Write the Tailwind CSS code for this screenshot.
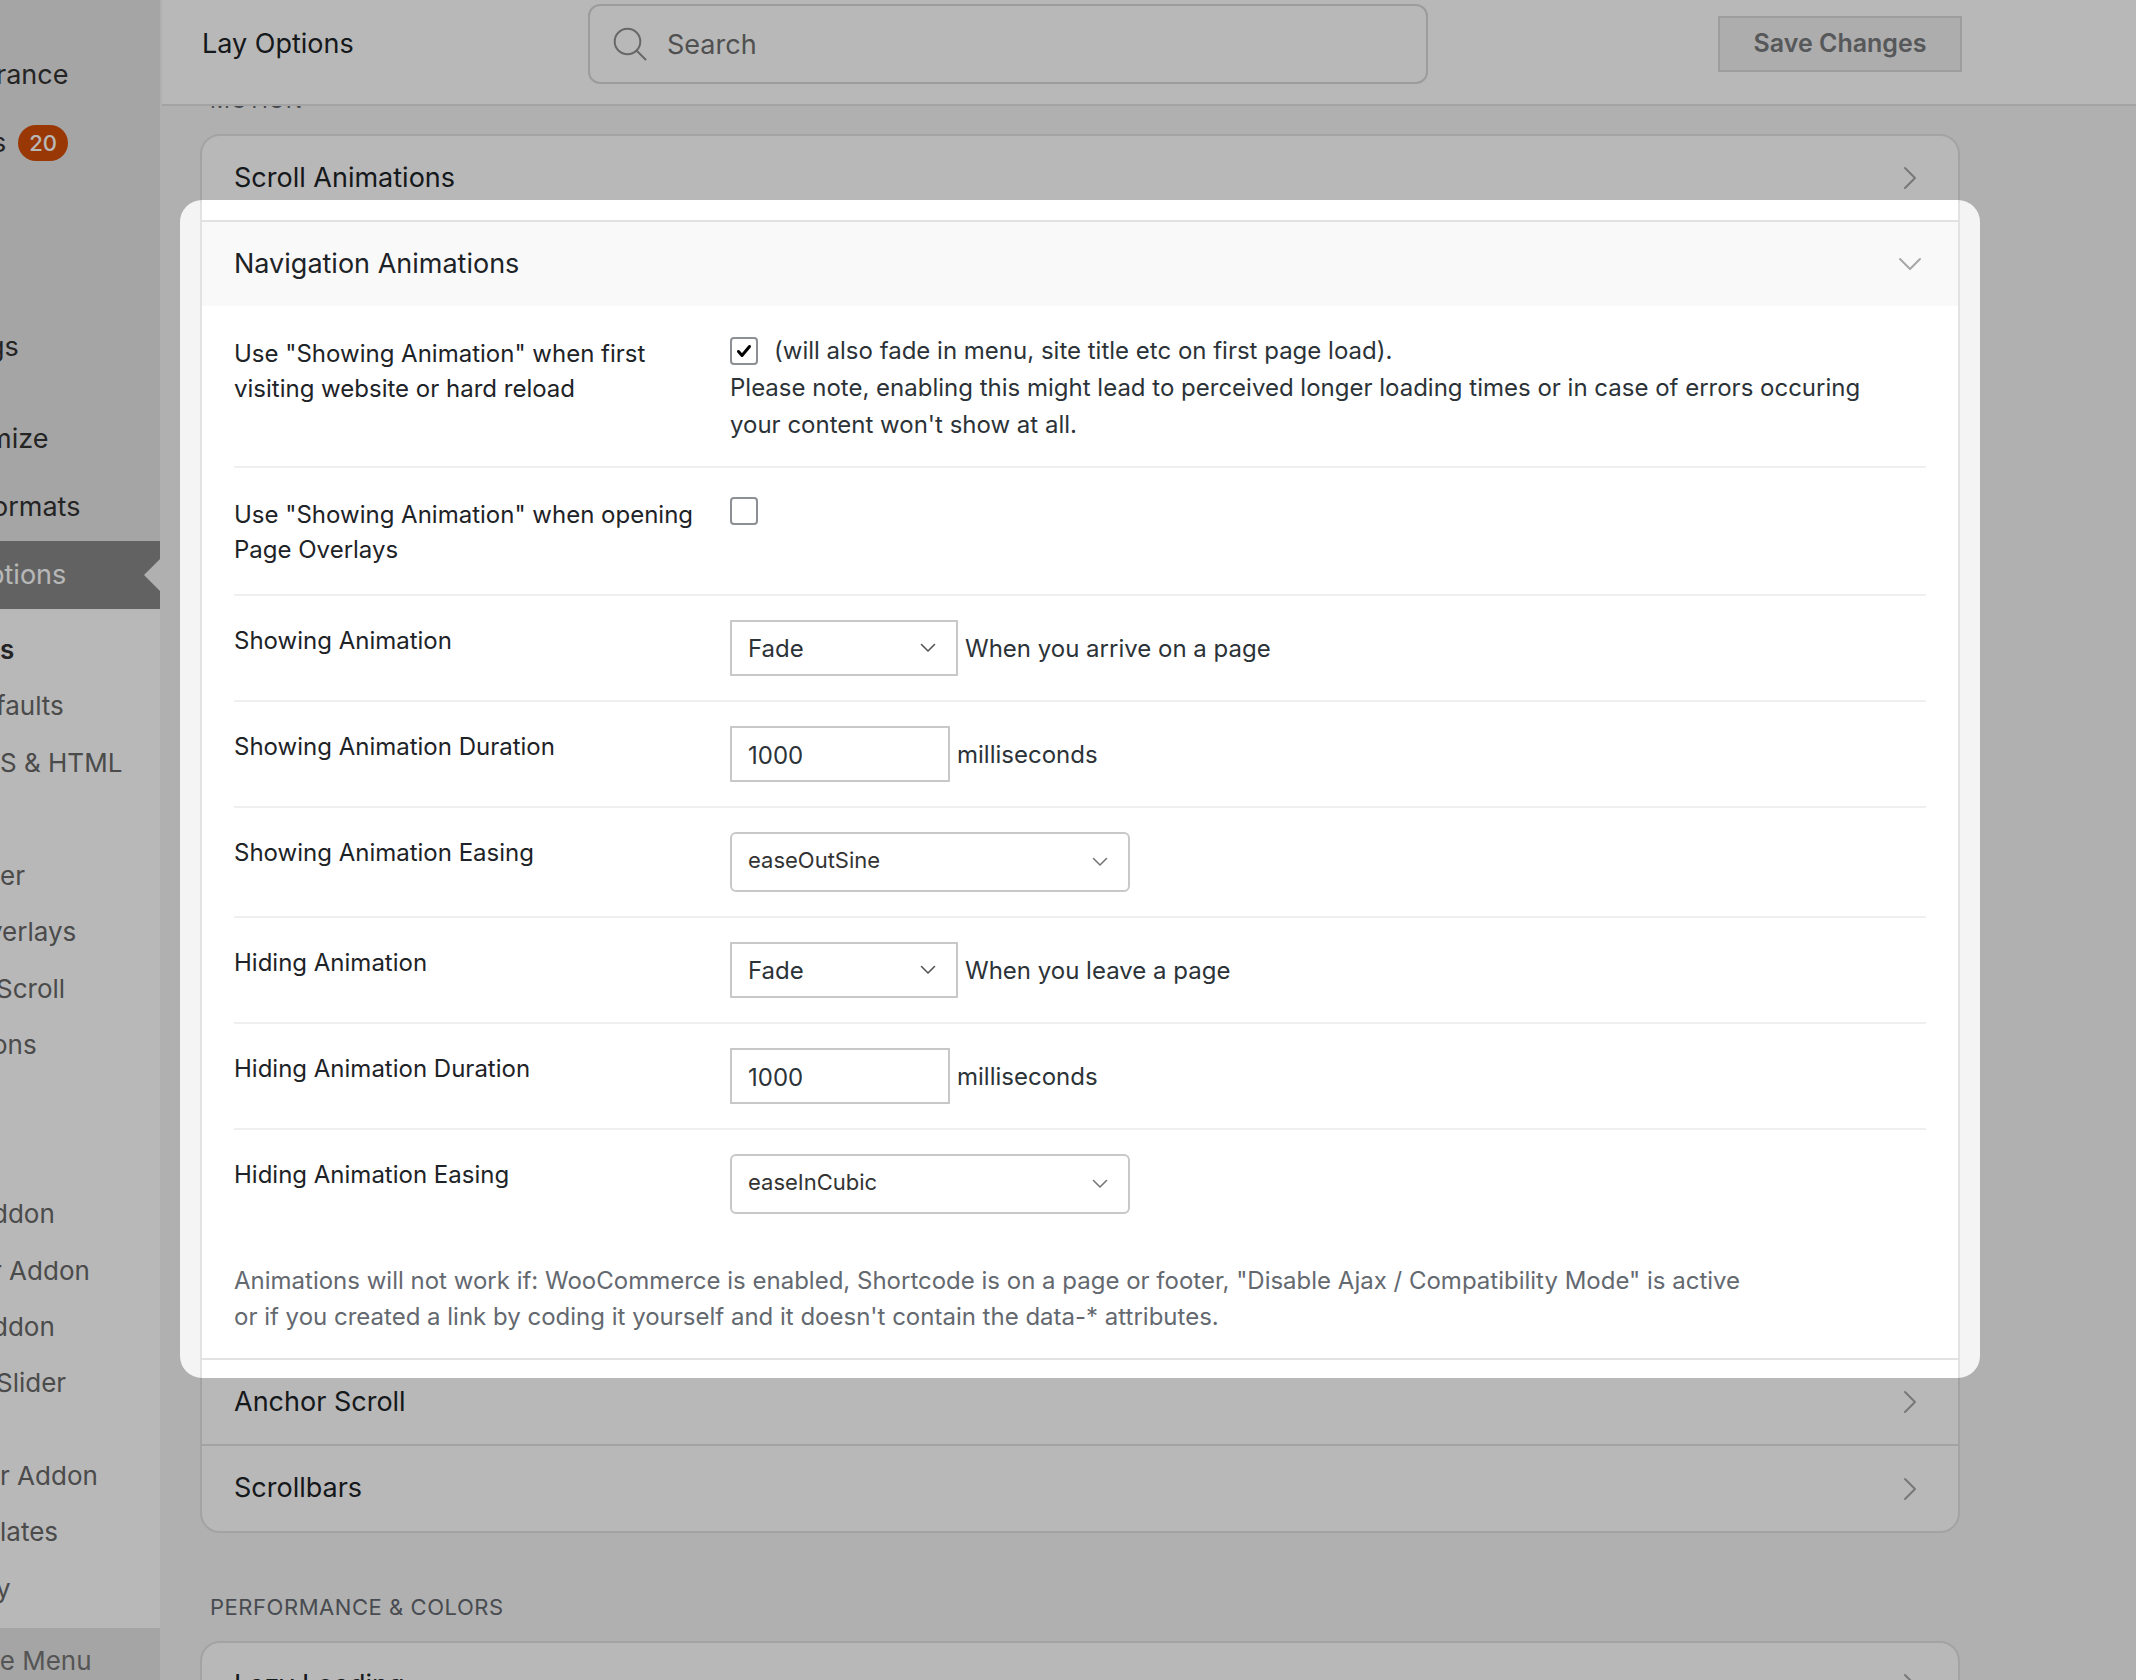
<!DOCTYPE html>
<html lang="en">
<head>
<meta charset="utf-8">
<meta name="viewport" content="width=device-width, initial-scale=1">
<title>Lay Options</title>
<script src="https://cdn.jsdelivr.net/npm/@tailwindcss/browser@4"></script>
</head>
<body class="font-[Inter,sans-serif] bg-[#f4f4f4] text-[#1d2327]">
<div class="relative flex h-screen overflow-hidden">

  <!-- Admin menu, scrolled partly off the left edge -->
  <nav aria-label="Admin menu" class="flex w-40 shrink-0 flex-col overflow-hidden bg-[#e5e5e5] text-[27px] leading-9 text-[#333] whitespace-nowrap">
    <ul class="-ml-1 pt-[41px]">
      <li><a href="#" class="flex h-17 items-center">rance</a></li>
      <li><a href="#" class="-ml-1 flex h-17 items-center gap-3">s <span class="flex h-9 items-center rounded-full bg-[#d64e07] px-[11px] text-[22px] font-medium text-white">20</span></a></li>
      <li class="h-34"></li>
      <li><a href="#" class="-ml-2 flex h-17 items-center">gs</a></li>
      <li class="h-6"></li>
      <li><a href="#" class="-ml-2 flex h-17 items-center">mize</a></li>
      <li><a href="#" class="-ml-1 flex h-17 items-center">ormats</a></li>
    </ul>
    <a href="#" aria-current="page" class="flex h-17 items-center justify-between bg-[#888] text-white">
      <span class="-ml-3">ptions</span>
      <svg class="h-8 w-4" viewBox="0 0 16 32" aria-hidden="true"><path d="M16 0L0 16L16 32Z" fill="#f4f4f4"/></svg>
    </a>
    <ul class="flex flex-1 flex-col justify-between bg-white pt-[13px] pb-[11px] text-[26px] text-[#686868]">
      <li><a href="#" class="flex h-14 items-center font-semibold text-[#333]">s</a></li>
      <li><a href="#" class="-ml-1 flex h-14 items-center">faults</a></li>
      <li><a href="#" class="flex h-14 items-center">S &amp; HTML</a></li>
      <li class="h-14"></li>
      <li><a href="#" class="flex h-14 items-center">er</a></li>
      <li><a href="#" class="-ml-3 flex h-14 items-center">verlays</a></li>
      <li><a href="#" class="-ml-1 flex h-14 items-center">Scroll</a></li>
      <li><a href="#" class="-ml-2 flex h-14 items-center">ons</a></li>
      <li class="h-28"></li>
      <li><a href="#" class="-ml-2 flex h-14 items-center">ddon</a></li>
      <li><a href="#" class="-ml-2 flex h-14 items-center">r Addon</a></li>
      <li><a href="#" class="-ml-2 flex h-14 items-center">ddon</a></li>
      <li><a href="#" class="-ml-1 flex h-23 items-start pt-2.5">Slider</a></li>
      <li><a href="#" class="flex h-14 items-center">r Addon</a></li>
      <li><a href="#" class="flex h-14 items-center">lates</a></li>
      <li><a href="#" class="-ml-1 flex h-14 items-center">y</a></li>
    </ul>
    <button type="button" class="-ml-3.5 h-13 pt-3.5 text-left text-[26px] text-[#777]">se Menu</button>
  </nav>

  <main class="min-w-0 flex-1">
    <header class="relative z-10 ml-0.5 h-[106px] border-b-2 border-[#e2e2e2] bg-white pl-10">
      <div class="flex h-[88px] max-w-[1760px] items-center">
        <h1 class="w-[386px] shrink-0 text-[27px] leading-9">Lay Options</h1>
        <label class="flex h-20 w-full max-w-[840px] items-center gap-5 rounded-xl border-2 border-[#d8d8d8] pl-[23px]">
          <svg class="size-[34px] shrink-0" viewBox="0 0 34 34" fill="none" stroke="#8f8f8f" stroke-width="2" stroke-linecap="round" aria-hidden="true"><circle cx="14.500" cy="14.500" r="12.800"/><path d="M23.500 23.500L32.500 32.500"/></svg>
          <input type="search" placeholder="Search" aria-label="Search" class="min-w-0 flex-1 bg-transparent pt-0.5 text-[27px] leading-9 outline-none placeholder:text-[#707070]">
        </label>
        <button type="button" class="ml-auto h-14 w-61 shrink-0 border-2 border-[#dcdcdc] bg-[#f0f0f0] text-[25px] font-semibold text-[#787a7d]">Save Changes</button>
      </div>
    </header>

    <div class="-mt-6 max-w-[1840px] px-10 text-[24px]">
      <h2 class="mb-4 px-2.5 text-[22px] leading-9 tracking-wide text-[#646970]">MOTION</h2>
      <div class="rounded-[20px] border-2 border-[#e2e2e2] bg-white">
        <button type="button" class="flex h-21 w-full items-center justify-between pr-9 pl-8 text-[27px]">Scroll Animations
          <svg class="size-6" viewBox="0 0 24 24" fill="none" stroke="#a7a7a7" stroke-width="2" stroke-linecap="round" stroke-linejoin="round" aria-hidden="true"><path d="M7 2L17 12L7 22"/></svg>
        </button>

        <section class="relative border-y-2 border-[#e2e2e2]">
          <button type="button" aria-expanded="true" class="flex h-21 w-full items-center justify-between bg-[#f9f9f9] pr-9 pl-8 text-[27px]">Navigation Animations
            <svg class="size-6" viewBox="0 0 24 24" fill="none" stroke="#a7a7a7" stroke-width="2" stroke-linecap="round" stroke-linejoin="round" aria-hidden="true"><path d="M2 7L12 17L22 7"/></svg>
          </button>

          <div class="px-8 pt-px">
            <div class="flex border-b-2 border-[#efefef]">
              <label for="first" class="w-124 shrink-0 pt-[29px] pb-[27px] pr-10 leading-[35px]">Use "Showing Animation" when first visiting website or hard reload</label>
              <div class="pt-[25px] pb-[23px] leading-[37px] text-[#2c3338]">
                <div class="flex items-center gap-4">
                  <span class="relative flex size-7 shrink-0">
                    <input id="first" type="checkbox" checked class="peer size-7 appearance-none rounded-[4px] border-2 border-[#8c8f94] bg-white">
                    <svg class="pointer-events-none absolute inset-0 hidden peer-checked:block" viewBox="0 0 28 28" fill="none" stroke="#000" stroke-width="3" stroke-linecap="round" stroke-linejoin="round" aria-hidden="true"><path d="M8.500 14.500L12 18.500L19.500 9.500"/></svg>
                  </span>
                  <span>(will also fade in menu, site title etc on first page load).</span>
                </div>
                <p>Please note, enabling this might lead to perceived longer loading times or in case of errors occuring<br>your content won't show at all.</p>
              </div>
            </div>

            <div class="flex border-b-2 border-[#efefef]">
              <label for="overlays" class="w-124 shrink-0 pt-[29px] pb-[27px] pr-6 leading-[35px]">Use "Showing Animation" when opening Page Overlays</label>
              <div class="pt-[29px]">
                <input id="overlays" type="checkbox" class="block size-7 appearance-none rounded-[4px] border-2 border-[#8c8f94] bg-white">
              </div>
            </div>

            <div class="flex border-b-2 border-[#efefef]">
              <label for="show" class="w-124 shrink-0 pt-[27px] leading-[35px]">Showing Animation</label>
              <div class="flex items-center gap-[7px] py-6 text-[#2c3338]">
                <span class="relative">
                  <select id="show" class="block h-14 w-57 appearance-none border-2 border-[#c8c8c8] bg-white px-4 pt-0.5"><option>Fade</option></select>
                  <svg class="pointer-events-none absolute top-5 right-5.5 size-4" viewBox="0 0 16 16" fill="none" stroke="#555" stroke-width="1.600" stroke-linecap="round" stroke-linejoin="round" aria-hidden="true"><path d="M1.500 4.500L8 11L14.500 4.500"/></svg>
                </span>
                <span class="pt-0.5">When you arrive on a page</span>
              </div>
            </div>

            <div class="flex border-b-2 border-[#efefef]">
              <label for="show-ms" class="w-124 shrink-0 pt-[27px] leading-[35px]">Showing Animation Duration</label>
              <div class="flex items-center gap-[7px] py-6 text-[#2c3338]">
                <input id="show-ms" type="text" value="1000" class="h-14 w-55 border-2 border-[#c8c8c8] bg-white px-4 pt-0.5">
                <span class="pt-0.5">milliseconds</span>
              </div>
            </div>

            <div class="flex border-b-2 border-[#efefef]">
              <label for="show-ease" class="w-124 shrink-0 pt-[27px] leading-[35px]">Showing Animation Easing</label>
              <div class="relative my-6">
                <select id="show-ease" class="block h-15 w-100 appearance-none rounded-md border-2 border-[#c8c8c8] bg-white px-4 pb-1 text-[22px] text-[#333]"><option>easeOutSine</option></select>
                <svg class="pointer-events-none absolute top-5.5 right-5.5 size-4" viewBox="0 0 16 16" fill="none" stroke="#777" stroke-width="1.600" stroke-linecap="round" stroke-linejoin="round" aria-hidden="true"><path d="M1.500 4.500L8 11L14.500 4.500"/></svg>
              </div>
            </div>

            <div class="flex border-b-2 border-[#efefef]">
              <label for="hide" class="w-124 shrink-0 pt-[27px] leading-[35px]">Hiding Animation</label>
              <div class="flex items-center gap-[7px] py-6 text-[#2c3338]">
                <span class="relative">
                  <select id="hide" class="block h-14 w-57 appearance-none border-2 border-[#c8c8c8] bg-white px-4 pt-0.5"><option>Fade</option></select>
                  <svg class="pointer-events-none absolute top-5 right-5.5 size-4" viewBox="0 0 16 16" fill="none" stroke="#555" stroke-width="1.600" stroke-linecap="round" stroke-linejoin="round" aria-hidden="true"><path d="M1.500 4.500L8 11L14.500 4.500"/></svg>
                </span>
                <span class="pt-0.5">When you leave a page</span>
              </div>
            </div>

            <div class="flex border-b-2 border-[#efefef]">
              <label for="hide-ms" class="w-124 shrink-0 pt-[27px] leading-[35px]">Hiding Animation Duration</label>
              <div class="flex items-center gap-[7px] py-6 text-[#2c3338]">
                <input id="hide-ms" type="text" value="1000" class="h-14 w-55 border-2 border-[#c8c8c8] bg-white px-4 pt-0.5">
                <span class="pt-0.5">milliseconds</span>
              </div>
            </div>

            <div class="flex">
              <label for="hide-ease" class="w-124 shrink-0 pt-[27px] leading-[35px]">Hiding Animation Easing</label>
              <div class="relative my-6">
                <select id="hide-ease" class="block h-15 w-100 appearance-none rounded-md border-2 border-[#c8c8c8] bg-white px-4 pb-1 text-[22px] text-[#333]"><option>easeInCubic</option></select>
                <svg class="pointer-events-none absolute top-5.5 right-5.5 size-4" viewBox="0 0 16 16" fill="none" stroke="#777" stroke-width="1.600" stroke-linecap="round" stroke-linejoin="round" aria-hidden="true"><path d="M1.500 4.500L8 11L14.500 4.500"/></svg>
              </div>
            </div>

            <p class="pt-[25px] pb-[23px] leading-9 text-[#646970]">Animations will not work if: WooCommerce is enabled, Shortcode is on a page or footer, "Disable Ajax / Compatibility Mode" is active<br>or if you created a link by coding it yourself and it doesn't contain the data-* attributes.</p>
          </div>

          <!-- Spotlight: everything outside this frame is dimmed -->
          <div class="pointer-events-none absolute -inset-x-[22px] -top-[22px] -bottom-5 z-20 rounded-[22px] shadow-[0_0_0_4000px_rgba(0,0,0,0.28)]"></div>
        </section>

        <button type="button" class="flex h-21 w-full items-center justify-between pr-9 pl-8 text-[27px]">Anchor Scroll
          <svg class="size-6" viewBox="0 0 24 24" fill="none" stroke="#a7a7a7" stroke-width="2" stroke-linecap="round" stroke-linejoin="round" aria-hidden="true"><path d="M7 2L17 12L7 22"/></svg>
        </button>
        <button type="button" class="flex h-[87px] w-full items-center justify-between border-t-2 border-[#e2e2e2] pr-9 pl-8 text-[27px]">Scrollbars
          <svg class="size-6" viewBox="0 0 24 24" fill="none" stroke="#a7a7a7" stroke-width="2" stroke-linecap="round" stroke-linejoin="round" aria-hidden="true"><path d="M7 2L17 12L7 22"/></svg>
        </button>
      </div>

      <h2 class="mt-14 mb-4 px-2.5 text-[22px] leading-9 tracking-wide text-[#646970]">PERFORMANCE &amp; COLORS</h2>
      <div class="rounded-[20px] border-2 border-[#e2e2e2] bg-white">
        <button type="button" class="flex h-21 w-full items-center justify-between pr-9 pl-8 text-[27px]">Lazy Loading
          <svg class="size-6" viewBox="0 0 24 24" fill="none" stroke="#a7a7a7" stroke-width="2" stroke-linecap="round" stroke-linejoin="round" aria-hidden="true"><path d="M7 2L17 12L7 22"/></svg>
        </button>
      </div>
    </div>
  </main>
</div>
</body>
</html>
